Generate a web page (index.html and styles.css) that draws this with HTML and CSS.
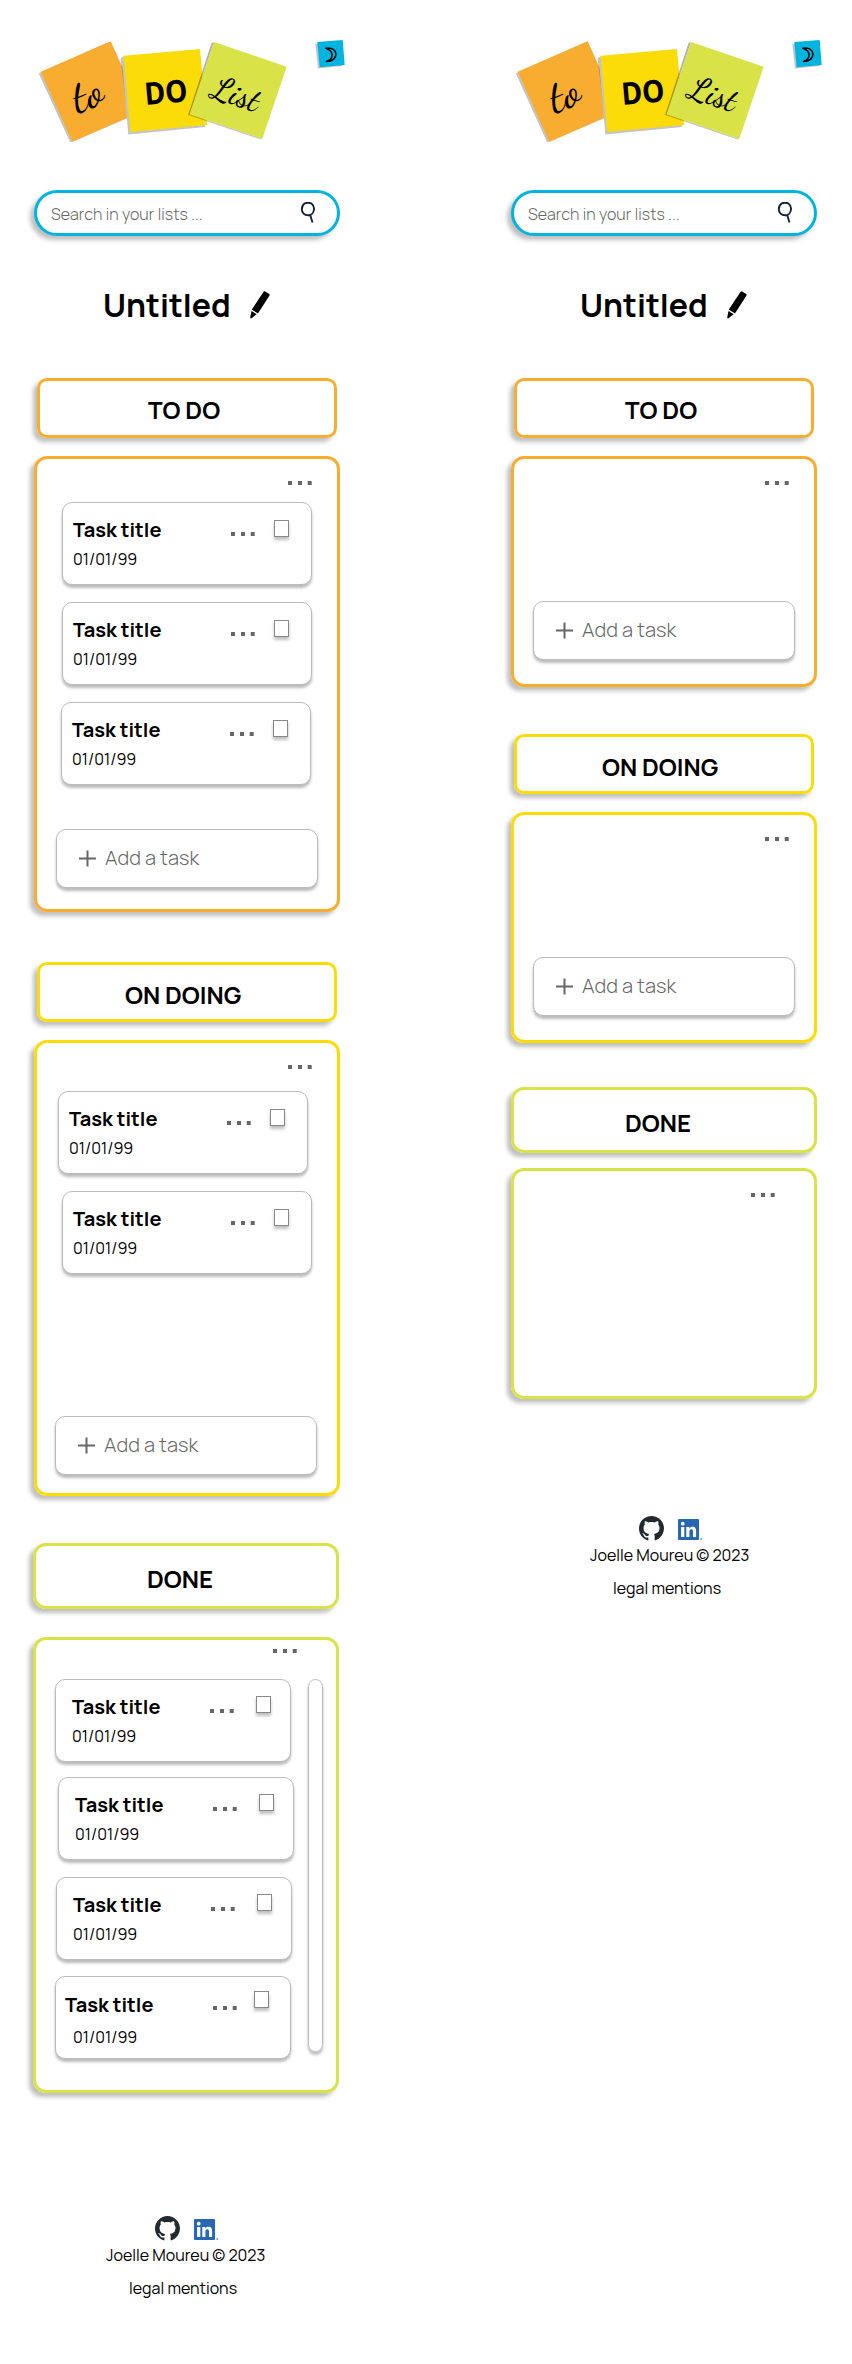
FILE: index.html
```html
<!DOCTYPE html>
<html lang="en">
<head>
<meta charset="utf-8">
<title>To do list</title>
<link rel="stylesheet" href="styles.css">
</head>
<body>
<svg class="defs" width="0" height="0">
  <symbol id="dots" viewBox="0 0 25 4"><path d="M0 0h4v4H0zM10 0h4v4h-4zM19.7 0h4v4h-4z" fill="#666"/></symbol>
  <symbol id="plus" viewBox="0 0 17 17"><path d="M8.5 .5v16M0 8.5h17" stroke="#666" stroke-width="2" fill="none"/></symbol>
  <symbol id="glass" viewBox="0 0 16 22"><path d="M4.6 1.6C6 .6 10 .6 11.4 1.6C13.3 3 14.3 5 14 7.500C13.600 11 11 13.300 8 13.300C4.500 13.300 1.800 10.900 1.800 7.300C1.800 4.800 2.800 2.900 4.600 1.600M10.200 13L12.500 20.500" stroke="#14213d" stroke-width="1.900" fill="none"/></symbol>
  <symbol id="pencil" viewBox="0 0 20 28"><path d="M13.600 .8Q14.300 0 15.200 .5L19.200 3.100Q20 3.700 19.500 4.600L7.900 22.400L1.800 18.500Z M1.500 20L6.600 23.200L1.200 27.500Q.3 27.300 .2 26.500Z"/></symbol>
  <symbol id="github" viewBox="0 0 16 16"><path fill="#24292f" d="M8 0C3.580 0 0 3.580 0 8c0 3.540 2.290 6.530 5.470 7.590.4.070.55-.17.55-.38 0-.19-.01-.82-.01-1.490-2.010.37-2.530-.49-2.690-.94-.09-.23-.48-.94-.82-1.130-.28-.15-.68-.52-.01-.53.63-.01 1.080.58 1.230.82.72 1.210 1.870.87 2.330.66.070-.52.28-.87.51-1.070-1.780-.2-3.640-.89-3.640-3.950 0-.87.31-1.590.82-2.150-.08-.2-.36-1.020.08-2.120 0 0 .67-.21 2.200.82.64-.18 1.320-.27 2-.27s1.360.09 2 .27c1.530-1.040 2.200-.82 2.200-.82.44 1.100.16 1.920.08 2.120.51.56.82 1.270.82 2.150 0 3.070-1.870 3.750-3.650 3.950.29.25.54.73.54 1.480 0 1.070-.01 1.930-.01 2.200 0 .21.15.46.55.38A8.010 8.010 0 0 0 16 8c0-4.420-3.580-8-8-8z"/></symbol>
  <symbol id="linkedin" viewBox="0 0 25 21"><rect width="21" height="21" rx="1" fill="#2867b2"/><circle cx="4.700" cy="4.700" r="1.900" fill="#fff"/><path fill="#fff" d="M3.100 8h3.200v10H3.100zM8.300 8h3v1.400c.6-1 1.700-1.700 3.100-1.700 3 0 3.700 2 3.700 4.600V18H15v-5c0-1.300-.1-2.700-1.700-2.700s-1.900 1.300-1.900 2.600V18H8.300z"/><circle cx="23.300" cy="20" r=".7" fill="none" stroke="#2867b2" stroke-width=".6"/></symbol>
  <symbol id="brand" viewBox="0 0 320 122">
    <path d="M5.700 53.200L76 22L107.500 92.500L37.300 122.700Z" fill="#c4c4c4"/>
    <path d="M7.700 51.700L77.700 21.300L109.300 91.300L39.300 121.700Z" fill="#f9ad30"/>
    <path d="M87.500 38.500L90.700 35.700L97.300 95L95 98.500Z" fill="#000" fill-opacity=".22"/>
    <path d="M88.700 38L165 31L172 107L95.300 114.500Z" fill="#c4c4c4"/>
    <path d="M90.700 35.700L167 29L174 105L97.300 112Z" fill="#fbdc08"/>
    <path d="M178.500 23L181 22L157 94.300L155 95Z" fill="#000" fill-opacity=".3"/>
    <path d="M155 95L157 94L229.300 118.700L227.500 119.500Z" fill="#000" fill-opacity=".22"/>
    <path d="M181 22L253.700 46.700L229.300 118.700L156.700 94.300Z" fill="#d9e247"/>
    <text class="script" font-size="46.500" transform="translate(44.500 92.500) rotate(-20)">to</text>
    <text class="heavy" font-size="31" transform="translate(112.500 85) rotate(-5)" textLength="43" lengthAdjust="spacingAndGlyphs">DO</text>
    <text class="script" font-size="33.500" transform="translate(177 76.500) rotate(18)">List</text>
    <path d="M282.300 24L307.500 22L309.500 46L285 48.600Z" fill="#c4c4c4"/>
    <path d="M284.300 22L309.700 20L311.700 45L286.700 47.300Z" fill="#00b4e0"/>
    <path d="M292.800 28.200C306 26 306.500 41.500 293.500 41.500C301.500 38.500 300.500 30.500 292.800 28.200Z" fill="none" stroke="#000" stroke-width="1.500" stroke-linejoin="round"/>
  </symbol>
</svg>

<main class="screens">
  <section class="screen">
    <svg class="brand"><use href="#brand"/></svg>
    <div class="search"><span>Search in your lists ...</span><svg class="glass"><use href="#glass"/></svg></div>
    <div class="heading"><h1>Untitled</h1><svg class="pencil"><use href="#pencil"/></svg></div>

    <h2 class="label orange"><span>TO DO</span></h2>
    <div class="panel orange">
      <svg class="dots menu"><use href="#dots"/></svg>
      <div class="cards">
        <article class="card"><div class="info"><h3>Task title</h3><p>01/01/99</p></div><svg class="dots"><use href="#dots"/></svg><i class="check"></i></article>
        <article class="card"><div class="info"><h3>Task title</h3><p>01/01/99</p></div><svg class="dots"><use href="#dots"/></svg><i class="check"></i></article>
        <article class="card out-1"><div class="info"><h3>Task title</h3><p>01/01/99</p></div><svg class="dots"><use href="#dots"/></svg><i class="check"></i></article>
      </div>
      <div class="add"><svg class="plus"><use href="#plus"/></svg><span>Add a task</span></div>
    </div>

    <h2 class="label yellow gap-50"><span>ON DOING</span></h2>
    <div class="panel yellow second">
      <svg class="dots menu"><use href="#dots"/></svg>
      <div class="cards">
        <article class="card out-4"><div class="info"><h3>Task title</h3><p>01/01/99</p></div><svg class="dots"><use href="#dots"/></svg><i class="check"></i></article>
        <article class="card"><div class="info"><h3>Task title</h3><p>01/01/99</p></div><svg class="dots"><use href="#dots"/></svg><i class="check"></i></article>
      </div>
      <div class="add out-1"><svg class="plus"><use href="#plus"/></svg><span>Add a task</span></div>
    </div>

    <h2 class="label lime shift gap-47"><span>DONE</span></h2>
    <div class="panel lime shift scrolling">
      <svg class="dots menu"><use href="#dots"/></svg>
      <div class="scroller">
        <div class="done-cards">
          <article class="card narrow"><div class="info"><h3>Task title</h3><p>01/01/99</p></div><svg class="dots"><use href="#dots"/></svg><i class="check"></i></article>
          <article class="card narrow in-3"><div class="info"><h3>Task title</h3><p>01/01/99</p></div><svg class="dots"><use href="#dots"/></svg><i class="check"></i></article>
          <article class="card narrow in-1"><div class="info"><h3>Task title</h3><p>01/01/99</p></div><svg class="dots"><use href="#dots"/></svg><i class="check"></i></article>
          <article class="card narrow loose"><div class="info"><h3>Task title</h3><p>01/01/99</p></div><svg class="dots"><use href="#dots"/></svg><i class="check"></i></article>
        </div>
        <div class="bar"></div>
      </div>
    </div>
    <footer class="footer">
      <div class="social"><svg class="github"><use href="#github"/></svg><svg class="linkedin"><use href="#linkedin"/></svg></div>
      <p class="author">Joelle Moureu © 2023</p>
      <p class="legal">legal mentions</p>
    </footer>
  </section>

  <section class="screen">
    <svg class="brand"><use href="#brand"/></svg>
    <div class="search"><span>Search in your lists ...</span><svg class="glass"><use href="#glass"/></svg></div>
    <div class="heading"><h1>Untitled</h1><svg class="pencil"><use href="#pencil"/></svg></div>

    <h2 class="label orange"><span>TO DO</span></h2>
    <div class="panel orange empty">
      <svg class="dots menu"><use href="#dots"/></svg>
      <div class="add"><svg class="plus"><use href="#plus"/></svg><span>Add a task</span></div>
    </div>
    <h2 class="label yellow gap-47"><span>ON DOING</span></h2>
    <div class="panel yellow empty">
      <svg class="dots menu"><use href="#dots"/></svg>
      <div class="add"><svg class="plus"><use href="#plus"/></svg><span>Add a task</span></div>
    </div>
    <h2 class="label lime gap-44"><span>DONE</span></h2>
    <div class="panel lime empty close">
      <svg class="dots menu"><use href="#dots"/></svg>
    </div>
    <footer class="footer raised">
      <div class="social"><svg class="github"><use href="#github"/></svg><svg class="linkedin"><use href="#linkedin"/></svg></div>
      <p class="author">Joelle Moureu © 2023</p>
      <p class="legal">legal mentions</p>
    </footer>
  </section>
</main>
</body>
</html>
```
FILE: styles.css
```css
* { box-sizing: border-box; }
body { margin: 0; background: #fff; color: #000; font-family: Manrope, Inter, sans-serif; }
h1, h2, h3, p { margin: 0; }
svg { display: block; flex: none; overflow: visible; }
span, h1, h3, p { white-space: nowrap; }
.defs { position: absolute; }

.screens { display: flex; height: 2364px; overflow: hidden; }
.screen { flex: 0 0 477px; padding: 20px 0 0 34px; }
.screen + .screen { flex-basis: 375px; }

.brand { width: 320px; height: 122px; margin-left: -1px; }
.script { font-family: "Dancing Script", "Liberation Serif", serif; font-weight: 500; }
.heavy { font-family: "Noto Sans", sans-serif; font-weight: 700; }

.search { display: flex; align-items: flex-start; justify-content: space-between; width: 306px; height: 46px; margin-top: 48px; padding: 9px 21px 0 14px; border: 3px solid #00b4e0; border-radius: 23px; background: #fff; box-shadow: -4px 4px 4px rgba(0, 0, 0, .25); }
.search span { font-size: 16px; line-height: 24px; font-weight: 350; color: #666; letter-spacing: .07px; }
.glass { width: 16px; height: 22px; }

.heading { display: flex; align-items: flex-start; gap: 20px; height: 142px; padding: 49px 0 0 69px; }
h1 { width: 127px; font-size: 32px; line-height: 40px; font-weight: 700; }
.pencil { width: 20px; height: 28px; margin-top: 6px; }

.label { width: 300px; height: 60px; margin-left: 3px; padding: 15px 0 0 108px; border: 3px solid; border-radius: 10px; font-size: 24px; line-height: 28px; font-weight: 700; box-shadow: -4px 4px 4px rgba(0, 0, 0, .25); }
.label span { color: #000; }
.label.yellow { padding: 16px 0 0 85px; }
.label.lime { width: 306px; height: 66px; margin-left: 0; padding: 19px 0 0 111px; border-radius: 13px; }
.gap-50 { margin-top: 50px; }
.gap-47 { margin-top: 47px; }
.gap-44 { margin-top: 44px; }

.panel { width: 306px; height: 456px; margin-top: 18px; padding: 22px 19px 0; border: 3px solid; border-radius: 13px; box-shadow: -4px 4px 4px rgba(0, 0, 0, .25); }
.orange { border-color: #f9ad30; }
.yellow { border-color: #fbdc08; }
.lime { border-color: #d9e247; }
.label.shift, .panel.shift { margin-left: -1px; }

.dots { width: 25px; height: 4px; }
.menu { margin-left: 232px; }
.cards { display: flex; flex-direction: column; gap: 17px; height: 327px; padding: 17px 0 0 6px; }
.card { display: flex; align-items: flex-start; width: 250px; height: 83px; border: 1px solid #bbb; border-radius: 10px; background: #fff; box-shadow: 0 3px 3px rgba(0, 0, 0, .27); }
.card .dots { margin-top: 29px; }
.info { flex: 0 0 167.5px; padding: 15px 0 0 10px; }
h3 { font-size: 20px; line-height: 24px; font-weight: 700; color: #000; }
.info p { margin-top: 7px; font-size: 16px; line-height: 20px; color: #000; }
.check { width: 15px; height: 17px; margin: 17px 0 0 18.5px; border: 1px solid #888; background: #fff; box-shadow: 0 3px 3px rgba(0, 0, 0, .25); }
.out-1 { margin-left: -1px; }
.out-4 { margin-left: -4px; }
.in-1 { margin-left: 1px; }
.in-3 { margin-left: 3px; }

.add { display: flex; align-items: flex-start; gap: 9px; width: 262px; height: 59px; margin-top: 17px; padding: 16px 0 0 22px; border: 1px solid #bbb; border-radius: 10px; background: #fff; box-shadow: 0 3px 3px rgba(0, 0, 0, .27); }
.add span { font-size: 20px; line-height: 24px; font-weight: 350; color: #666; letter-spacing: .05px; }
.plus { width: 17px; height: 17px; margin-top: 4px; }
.second .cards { height: 330px; padding-top: 22px; }

.scrolling { margin-top: 28px; padding-top: 9px; }
.scrolling .menu { margin-left: 217.5px; }
.scroller { display: flex; gap: 14px; padding-top: 26px; }
.done-cards { display: flex; flex: none; flex-direction: column; gap: 16px; width: 239px; }
.card.narrow { width: 236px; flex: none; }
.card.in-3 { margin-bottom: 1px; margin-top: -1px; }
.narrow .info { flex-basis: 153.5px; padding-left: 16px; }
.narrow .check { margin: 16px 0 0 21px; }
.loose .info { flex-basis: 156.5px; padding: 16px 0 0 9px; }
.loose .info p { margin: 10px 0 0 8px; }
.loose .check { margin: 14px 0 0 16.5px; }
.bar { flex: none; width: 15px; height: 373px; border: 1px solid #bbb; border-radius: 8px; box-shadow: 0 3px 3px rgba(0, 0, 0, .27); }

.empty { height: 231px; }
.empty .add { margin-top: 116px; }
.empty.close { margin-top: 15px; }
.close .menu { margin-left: 218px; }

.footer { padding: 123px 0 0 72px; font-size: 16px; line-height: 20px; font-weight: 400; }
.footer.raised { padding: 117px 0 0 79px; }
.social { display: flex; align-items: flex-end; gap: 14px; margin-left: 49px; }
.github { width: 25px; height: 25px; }
.linkedin { width: 25px; height: 21px; margin-bottom: 1px; }
.author { margin-top: 4px; }
.legal { margin: 13px 0 0 23px; }
```
